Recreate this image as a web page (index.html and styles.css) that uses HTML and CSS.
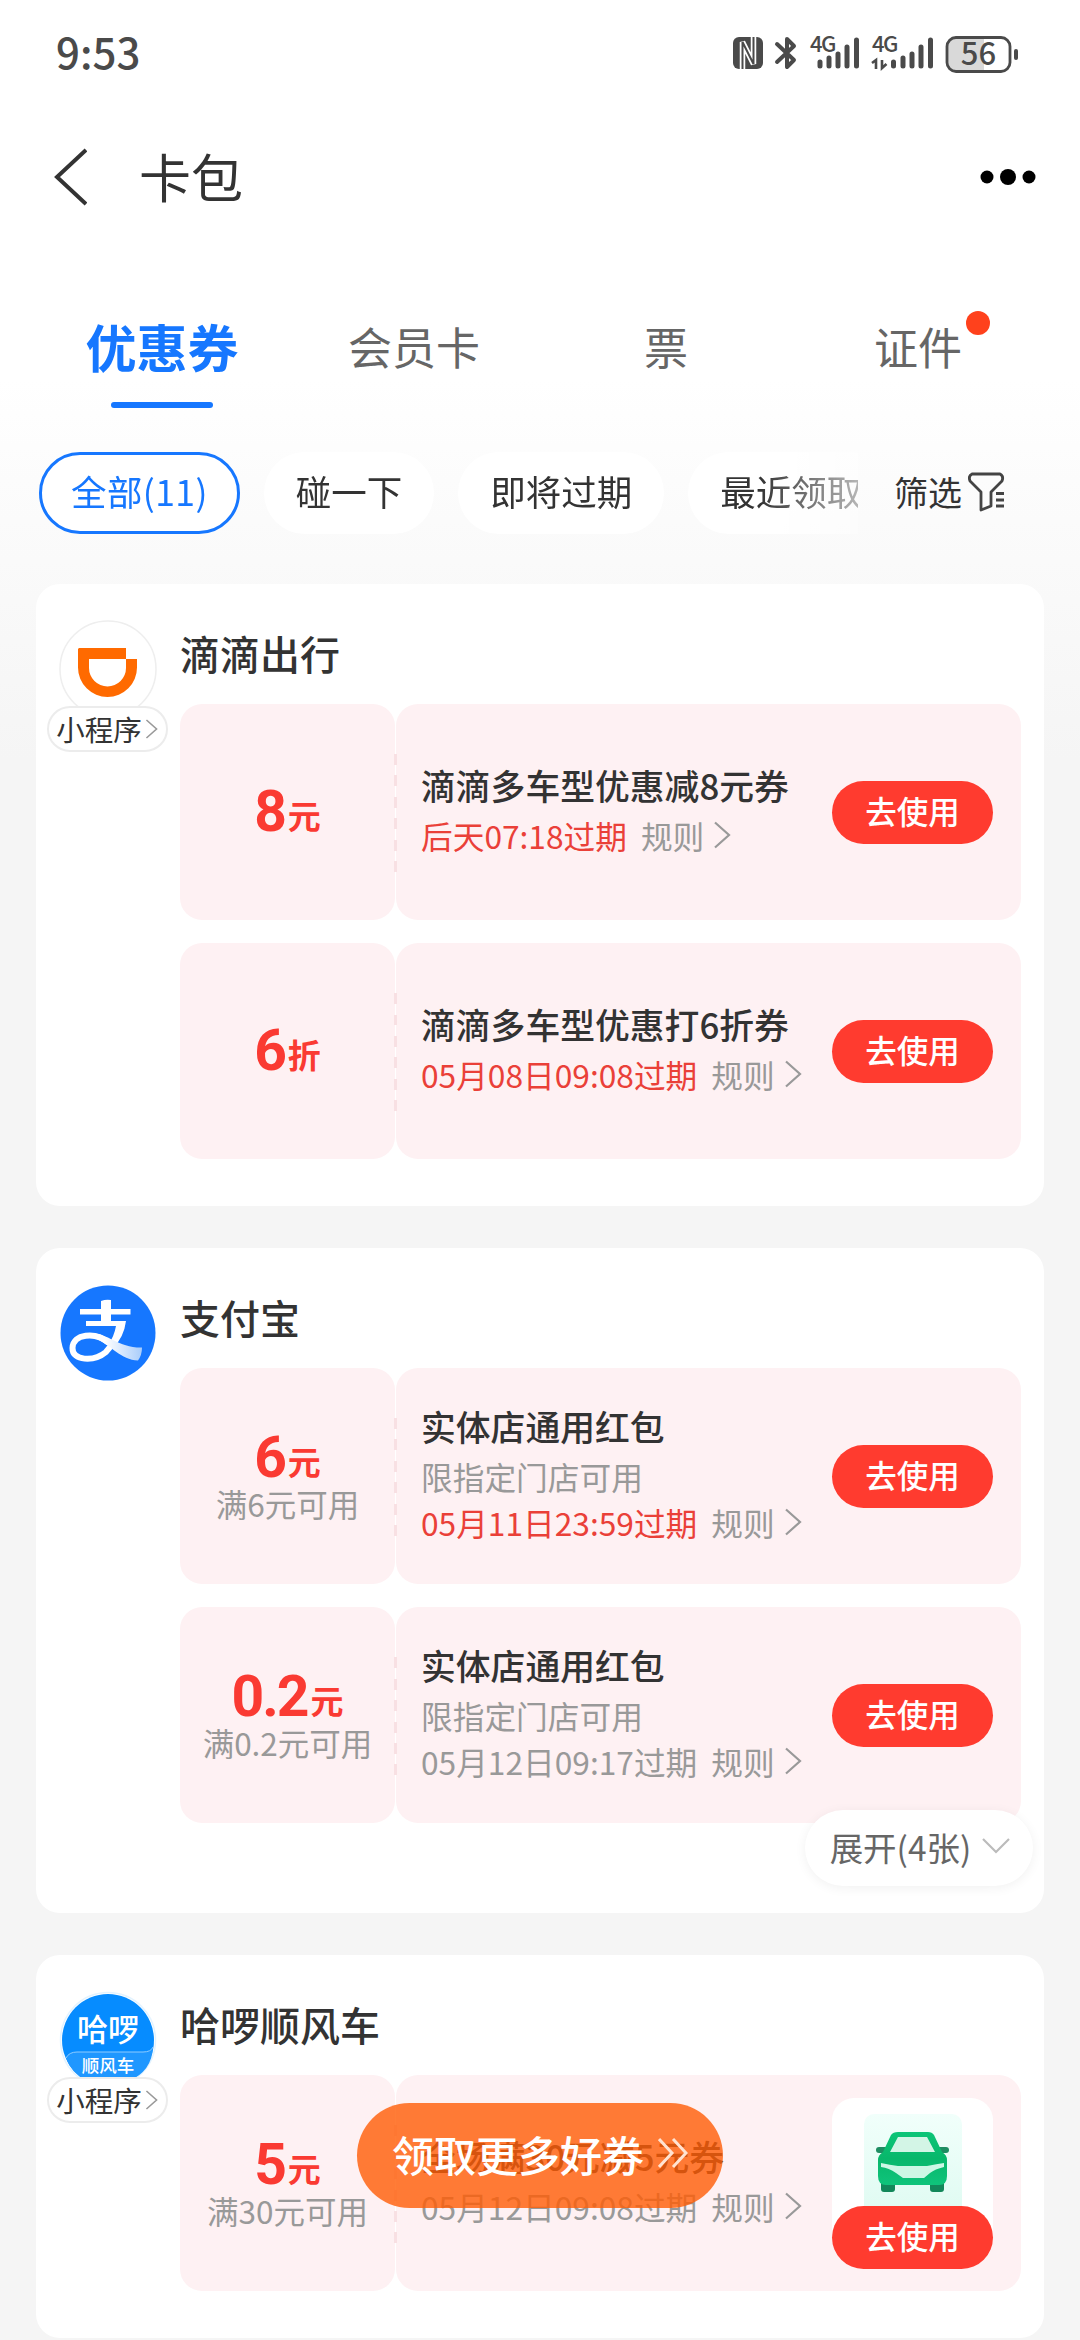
FILE: index.html
```
<!DOCTYPE html>
<html lang="zh-CN">
<head>
  <meta charset="UTF-8">
  <title>卡包</title>
  <link rel="stylesheet" href="styles.css">
</head>
<body>
  <!-- 公用箭头图标 -->
  <svg class="defs" width="0" height="0">
    <symbol id="arrow" viewBox="0 0 18 28"><path d="M2 1.5 L16 14 L2 26.5" fill="none" stroke="currentColor" stroke-width="2.2"/></symbol>
  </svg>

  <div class="page">
    <!-- 状态栏 -->
    <div class="status-bar">
      <span class="time">9:53</span>
      <svg class="status-icons" width="290" height="40" viewBox="0 0 290 40" fill="#4a4a4a">
        <!-- NFC -->
        <rect x="1" y="3" width="30" height="32" rx="6"/>
        <path d="M10.500 35 V8 L21.500 30 V3" fill="none" stroke="#fff" stroke-width="5.500"/>
        <path d="M10.500 35 V8 L21.500 30 V3" fill="none" stroke="#4a4a4a" stroke-width="2"/>
        <!-- 蓝牙 -->
        <path d="M45 10 L62 26 L55 33 V5 L62 12 L45 28" fill="none" stroke="#4a4a4a" stroke-width="4" stroke-linecap="round" stroke-linejoin="round"/>
        <!-- 信号 -->
        <text x="78" y="18" class="net">4G</text>
        <path d="M88 28V32M97 24V32M106 20V32M115 13V32M124.500 6V32" class="bars"/>
        <text x="140" y="18" class="net">4G</text>
        <path d="M161.500 28V32M171 24V32M180 20V32M189 13V32M198.500 6V32" class="bars"/>
        <path d="M144 35V26L140 29M150 26V34L154.500 30" fill="none" stroke="#4a4a4a" stroke-width="2.6"/>
        <!-- 电池 -->
        <path d="M222 4 H252 V36 H222 Q216 34 216 28 V12 Q216 6 222 4Z" fill="#d9d9d9"/>
        <rect x="215" y="3.500" width="63" height="34" rx="9" fill="none" stroke="#4a4a4a" stroke-width="2.8"/>
        <rect x="282" y="15" width="4" height="11" rx="2"/>
        <text x="246.500" y="31" text-anchor="middle" class="battery">56</text>
      </svg>
    </div>

    <!-- 标题栏 -->
    <header class="nav">
      <svg width="34" height="58" viewBox="0 0 34 58"><path d="M33 2 L4 29 L33 56" fill="none" stroke="#333" stroke-width="4"/></svg>
      <h1>卡包</h1>
      <svg class="more" width="56" height="18" viewBox="0 0 56 18"><circle cx="7" cy="9" r="6.5"/><circle cx="28" cy="9" r="8"/><circle cx="49" cy="9" r="6.5"/></svg>
    </header>

    <!-- 分类标签 -->
    <nav class="tabs">
      <div class="tab active">优惠券</div>
      <div class="tab">会员卡</div>
      <div class="tab">票</div>
      <div class="tab"><span class="has-dot">证件</span></div>
    </nav>

    <!-- 筛选条件 -->
    <div class="filters">
      <div class="chips">
        <span class="chip active">全部(11)</span>
        <span class="chip">碰一下</span>
        <span class="chip">即将过期</span>
        <span class="chip">最近领取</span>
      </div>
      <div class="filter-button">
        <span>筛选</span>
        <svg width="37" height="40" viewBox="0 0 37 40" fill="none" stroke="#444" stroke-width="2.8" stroke-linejoin="round">
          <path d="M4 2 H32 Q36 4 34 9 L23 20 V34 L13 38 V20 L2 9 Q0 4 4 2Z"/>
          <path d="M28 21.500H36M28 28H36M28 34H36" stroke-width="3"/>
        </svg>
      </div>
    </div>

    <main class="card-list">
      <!-- 滴滴出行 -->
      <section class="card">
        <div class="brand">
          <svg class="logo" width="98" height="98" viewBox="0 0 98 98">
            <circle cx="49" cy="49" r="48" fill="#fff" stroke="#eee" stroke-width="1.500"/>
            <path d="M20 28 H67 V39 H78 V47.500 A29.500 29.500 0 0 1 19 47.500 V29Z M30 39 V48 A18.500 18.500 0 0 0 67 48 V39Z" fill="#ff6a00" fill-rule="evenodd"/>
          </svg>
          <span class="mini">小程序<svg width="13" height="26"><use href="#arrow"/></svg></span>
        </div>
        <div class="content">
          <h2>滴滴出行</h2>
          <div class="coupon">
            <div class="amount"><p class="price">8<small>元</small></p></div>
            <div class="detail">
              <div class="info">
                <p class="name">滴滴多车型优惠减8元券</p>
                <p class="date red">后天07:18过期<span class="rule">规则<svg width="18" height="28"><use href="#arrow"/></svg></span></p>
              </div>
              <button class="use">去使用</button>
            </div>
          </div>
          <div class="coupon">
            <div class="amount"><p class="price">6<small>折</small></p></div>
            <div class="detail">
              <div class="info">
                <p class="name">滴滴多车型优惠打6折券</p>
                <p class="date red">05月08日09:08过期<span class="rule">规则<svg width="18" height="28"><use href="#arrow"/></svg></span></p>
              </div>
              <button class="use">去使用</button>
            </div>
          </div>
        </div>
      </section>

      <!-- 支付宝 -->
      <section class="card has-more">
        <div class="brand">
          <svg class="logo" width="98" height="98" viewBox="0 0 98 98">
            <defs>
              <linearGradient id="tail" x1="0" y1="0" x2="1" y2="0"><stop offset="0.3" stop-color="#fff"/><stop offset="1" stop-color="#a9cdfb"/></linearGradient>
            </defs>
            <circle cx="49" cy="49" r="47.500" fill="#1677ff"/>
            <path d="M21 25 H42 V17 Q47 15 52 16 V25 H71.500 V30.500 H52 V37 H67 Q65 53 54 64 L49 61 Q55 53 57 42 H27 V37 H42 V30.500 H21Z" fill="#fff"/>
            <path d="M50 59 C36 47 14 50 13.500 64 C13 77 35 78 47 68 L56 57" fill="none" stroke="#fff" stroke-width="6"/>
            <path d="M30 49 C48 48 59 64 83 63.500 Q83 71 79 76.500 C62 76 52 61 36 54Z" fill="url(#tail)"/>
          </svg>
        </div>
        <div class="content">
          <h2>支付宝</h2>
          <div class="coupon">
            <div class="amount"><p class="price">6<small>元</small></p><p class="limit">满6元可用</p></div>
            <div class="detail">
              <div class="info">
                <p class="name">实体店通用红包</p>
                <p class="desc">限指定门店可用</p>
                <p class="date red">05月11日23:59过期<span class="rule">规则<svg width="18" height="28"><use href="#arrow"/></svg></span></p>
              </div>
              <button class="use">去使用</button>
            </div>
          </div>
          <div class="coupon">
            <div class="amount"><p class="price">0.2<small>元</small></p><p class="limit">满0.2元可用</p></div>
            <div class="detail">
              <div class="info">
                <p class="name">实体店通用红包</p>
                <p class="desc">限指定门店可用</p>
                <p class="date">05月12日09:17过期<span class="rule">规则<svg width="18" height="28"><use href="#arrow"/></svg></span></p>
              </div>
              <button class="use">去使用</button>
            </div>
          </div>
        </div>
        <div class="expand">展开(4张)<svg width="28" height="16" viewBox="0 0 28 16"><path d="M1 1 L14 14 L27 1" fill="none" stroke="#bbb" stroke-width="2.2"/></svg></div>
      </section>

      <!-- 哈啰顺风车 -->
      <section class="card">
        <div class="brand">
          <svg class="logo" width="98" height="98" viewBox="0 0 98 98">
            <circle cx="49" cy="49" r="47.500" fill="#fff" stroke="#e3f3ff" stroke-width="1.500"/>
            <circle cx="49" cy="49" r="46" fill="#068cff"/>
            <path d="M7 67 Q10 61 18 61 H84 Q92 61 94 56 Q93 80 70 90 H28 Q12 82 7 67Z" fill="#1f97ff"/>
            <path d="M7 67 Q10 61 18 61 H84 Q92 61 94 56" fill="none" stroke="#8fccff" stroke-width="1"/>
            <text x="49" y="50" text-anchor="middle" class="logo-name">哈啰</text>
            <text x="49" y="81" text-anchor="middle" class="logo-sub">顺风车</text>
          </svg>
          <span class="mini">小程序<svg width="13" height="26"><use href="#arrow"/></svg></span>
        </div>
        <div class="content">
          <h2>哈啰顺风车</h2>
          <div class="coupon">
            <div class="amount"><p class="price">5<small>元</small></p><p class="limit">满30元可用</p></div>
            <div class="detail">
              <div class="info">
                <p class="name">全场满30元减5元券</p>
                <p class="date">05月12日09:08过期<span class="rule">规则<svg width="18" height="28"><use href="#arrow"/></svg></span></p>
              </div>
              <div class="goods">
                <svg width="161" height="108" viewBox="0 0 161 108">
                  <defs>
                    <linearGradient id="mint" x1="0" y1="0" x2="0" y2="1"><stop offset="0" stop-color="#f1fffb"/><stop offset="1" stop-color="#dcfaf0"/></linearGradient>
                    <linearGradient id="body" x1="0" y1="0" x2="0" y2="1"><stop offset="0" stop-color="#0cc578"/><stop offset=".5" stop-color="#08b76b"/><stop offset="1" stop-color="#0fc47b"/></linearGradient>
                  </defs>
                  <rect x="32" y="16" width="98" height="120" rx="10" fill="url(#mint)"/>
                  <rect x="49" y="82" width="14" height="12" rx="3" fill="#12875a"/>
                  <rect x="98" y="82" width="14" height="12" rx="3" fill="#12875a"/>
                  <rect x="44" y="49" width="14" height="6" rx="3" fill="#1f8d62"/>
                  <rect x="103" y="49" width="14" height="6" rx="3" fill="#1f8d62"/>
                  <path d="M66 34 H96 Q100 34 102 37 L110 54 Q115 57 115 62 V78 Q115 87 107 87 H54 Q46 87 46 78 V62 Q46 57 51 54 L59 37 Q61 34 66 34Z" fill="url(#body)"/>
                  <path d="M66 39 H95 L103 54 H58Z" fill="#d3f5e6"/>
                  <path d="M49 65 Q58 67 66 68 H95 Q105 66 112 65 V69 Q103 71 98 75 L92 80 H71 L64 75 Q57 70 49 69Z" fill="#cdf7e5"/>
                </svg>
                <button class="use">去使用</button>
              </div>
            </div>
          </div>
        </div>
      </section>
    </main>

    <!-- 底部悬浮按钮 -->
    <div class="float-button">领取更多好券<svg width="30" height="30" viewBox="0 0 30 30"><path d="M1 1 L14 15 L1 29 M15 1 L28 15 L15 29" fill="none" stroke="#ffe3d2" stroke-width="3"/></svg></div>
  </div>
</body>
</html>
```
FILE: styles.css
```
/* 全局重置 */
* { margin: 0; padding: 0; box-sizing: border-box; }
body {
  font-family: "Noto Sans CJK SC", sans-serif;
  color: #333;
  background: #f5f5f5;
}
svg { display: block; flex: none; }
.defs { position: absolute; }
.page {
  position: relative;
  width: 1080px;
  height: 2340px;
  overflow: hidden;
  background: linear-gradient(#fff 380px, #fcfcfc 480px, #f5f5f5 760px);
}

/* 状态栏 */
.status-bar {
  height: 108px;
  padding: 0 58px 0 56px;
  display: flex;
  align-items: center;
  justify-content: space-between;
}
.status-icons { overflow: visible; }
.time {
  padding-bottom: 6px;
  font-size: 42px;
  font-weight: 500;
  line-height: 50px;
  color: #4a4a4a;
}
.net { font-size: 22px; font-weight: 500; letter-spacing: -1.5px; }
.bars { fill: none; stroke: #4a4a4a; stroke-width: 5; stroke-linecap: round; }
.battery { font-size: 31px; font-weight: 500; }

/* 标题栏 */
.nav {
  height: 138px;
  padding: 0 44px 0 53px;
  display: flex;
  align-items: center;
}
.nav h1 {
  margin-left: 52px;
  padding-bottom: 3px;
  font-size: 52px;
  font-weight: 400;
  line-height: 60px;
}
.more { margin-left: auto; }

/* 分类标签 */
.tabs {
  height: 206px;
  padding: 70px 36px 0;
  display: grid;
  grid-template-columns: repeat(4, 252px);
}
.tab {
  display: flex;
  flex-direction: column;
  align-items: center;
  font-size: 44px;
  line-height: 60px;
  color: #666;
}
.tab.active {
  font-size: 51px;
  font-weight: 700;
  color: #1677ff;
}
.tab.active::after {
  content: "";
  width: 102px;
  height: 6px;
  margin-top: 26px;
  border-radius: 3px;
  background: #1677ff;
}
.has-dot { position: relative; }
.has-dot::after {
  content: "";
  position: absolute;
  top: -5px;
  right: -28px;
  width: 24px;
  height: 24px;
  border-radius: 50%;
  background: #ff411c;
}

/* 筛选条件 */
.filters {
  display: flex;
  height: 132px;
  padding-left: 39px;
}
.chips {
  width: 819px;
  height: 82px;
  display: flex;
  gap: 24px;
  overflow: hidden;
  -webkit-mask-image: linear-gradient(90deg, #000 720px, rgba(0, 0, 0, .35) 819px);
  mask-image: linear-gradient(90deg, #000 720px, rgba(0, 0, 0, .35) 819px);
}
.chip {
  flex: none;
  height: 82px;
  padding: 0 32px;
  border-radius: 41px;
  background: #fff;
  font-size: 35.5px;
  line-height: 77px;
  white-space: nowrap;
}
.chip.active {
  padding: 0 29px;
  border: 3px solid #1677ff;
  line-height: 71px;
  letter-spacing: .4px;
  color: #1677ff;
}
.filter-button {
  height: 82px;
  margin-left: 36px;
  padding-bottom: 3px;
  display: flex;
  align-items: center;
  gap: 6px;
  font-size: 34px;
}

/* 卡券分组 */
.card-list {
  padding: 0 36px;
  display: flex;
  flex-direction: column;
  gap: 42px;
}
.card {
  position: relative;
  display: grid;
  grid-template-columns: 144px 841px;
  padding-bottom: 47px;
  border-radius: 24px;
  background: #fff;
}
.card.has-more { padding-bottom: 90px; }
.brand {
  padding-top: 36px;
  display: flex;
  flex-direction: column;
  align-items: center;
}
.mini {
  position: relative;
  width: 121px;
  height: 46px;
  margin-top: -12px;
  margin-right: 2px;
  border: 2px solid #ececec;
  border-radius: 23px;
  background: #fff;
  display: flex;
  align-items: center;
  justify-content: center;
  gap: 3px;
  font-size: 28.500px;
  line-height: 38px;
}
.mini svg { color: #999; }
.logo-name { font-size: 31px; font-weight: 500; fill: #fff; }
.logo-sub { font-size: 17.500px; font-weight: 500; fill: #fff; }
.content h2 {
  height: 120px;
  padding-top: 39px;
  font-size: 40px;
  font-weight: 500;
  line-height: 60px;
}

/* 单张优惠券 */
.coupon {
  display: grid;
  grid-template-columns: 215px 625px;
  gap: 1px;
  height: 216px;
}
.coupon + .coupon { margin-top: 23px; }
.amount, .detail {
  border-radius: 22px;
  background: #fef1f3;
}
.amount {
  display: flex;
  flex-direction: column;
  align-items: center;
  justify-content: center;
}
.price {
  height: 52px;
  font-family: Roboto, "Noto Sans CJK SC", sans-serif;
  font-size: 57px;
  font-weight: 700;
  line-height: 52px;
  letter-spacing: -2px;
  color: #fa3a32;
}
.price small {
  position: relative;
  top: -2px;
  margin-left: 3px;
  font-size: 33px;
  line-height: 40px;
  letter-spacing: 0;
}
.limit {
  margin-bottom: -2px;
  font-size: 31.500px;
  line-height: 38px;
  color: #999;
}
.detail {
  position: relative;
  padding: 0 28px 0 25px;
  display: flex;
  align-items: center;
  justify-content: space-between;
}
/* 票券中间的虚线 */
.detail::before {
  content: "";
  position: absolute;
  left: -2px;
  top: 50px;
  width: 3px;
  height: 118px;
  background: repeating-linear-gradient(#f8e0e3 0 11px, transparent 11px 21.500px);
}
.info {
  padding-bottom: 6px;
  white-space: nowrap;
}
.name {
  margin-bottom: 3px;
  font-size: 34.800px;
  font-weight: 500;
  line-height: 48px;
}
.desc {
  font-size: 31.700px;
  line-height: 46px;
  color: #999;
}
.date {
  display: flex;
  font-size: 31.700px;
  line-height: 46px;
  color: #999;
}
.date.red { color: #ea4038; }
.rule {
  margin-left: 14px;
  display: flex;
  align-items: center;
  gap: 9px;
  color: #999;
}
.use {
  display: block;
  width: 161px;
  height: 63px;
  padding-bottom: 4px;
  border: none;
  border-radius: 32px;
  background: #ff3b2f;
  color: #fff;
  font-family: inherit;
  font-size: 31.500px;
  font-weight: 500;
}
.goods {
  width: 161px;
  height: 171px;
  border-radius: 22px 22px 32px 32px;
  background: #fff;
}

/* 展开更多 */
.expand {
  position: absolute;
  right: 11px;
  bottom: 27px;
  width: 228px;
  height: 76px;
  padding: 0 0 4px 2px;
  border-radius: 38px;
  background: #fff;
  box-shadow: 0 2px 12px rgba(0, 0, 0, .06);
  display: flex;
  align-items: center;
  justify-content: center;
  gap: 11px;
  font-size: 33.500px;
  color: #666;
}

/* 悬浮按钮 */
.float-button {
  position: absolute;
  left: 357px;
  top: 2103px;
  width: 366px;
  height: 105px;
  padding-bottom: 5px;
  border-radius: 53px;
  background: rgba(255, 92, 5, .8);
  display: flex;
  align-items: center;
  justify-content: center;
  gap: 14px;
  font-size: 42px;
  font-weight: 500;
  color: #fff;
}
```
